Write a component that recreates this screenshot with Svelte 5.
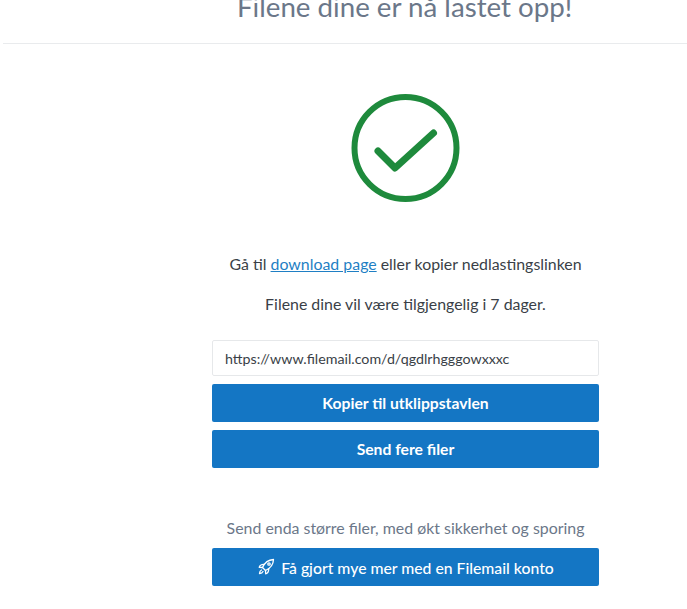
<script lang="ts">
	const url = 'https://www.filemail.com/d/qgdlrhgggowxxxc';
</script>

<div class="page">
	<header class="top">
		<h1>Filene dine er nå lastet opp!</h1>
	</header>

	<main class="content">
		<svg class="check" viewBox="0 0 110 110" width="110" height="110" aria-hidden="true">
			<circle cx="54.500" cy="55" r="51" fill="none" stroke="#1e8a3c" stroke-width="6" />
			<path d="M27 58 L44 75 L82.500 40" fill="none" stroke="#1e8a3c" stroke-width="7" stroke-linecap="round" stroke-linejoin="round" />
		</svg>

		<p class="lead">Gå til <a href="#download">download page</a> eller kopier nedlastingslinken</p>
		<p class="days">Filene dine vil være tilgjengelig i 7 dager.</p>

		<input class="link" type="text" readonly value={url} />
		<button class="btn">Kopier til utklippstavlen</button>
		<button class="btn">Send fere filer</button>

		<p class="upsell">Send enda større filer, med økt sikkerhet og sporing</p>
		<button class="btn account">
			<svg class="rocket" viewBox="0 0 18 18" width="18" height="18" fill="none" stroke="currentColor" stroke-width="1.300" stroke-linejoin="round" stroke-linecap="round" aria-hidden="true">
				<path d="M5.500 9.500 C7.500 5 11.500 1.800 16.500 1.500 C16.300 6.500 13 10.500 8.500 12.500 Z" />
				<path d="M5.500 9.500 L2.200 9.300 C2.500 7.800 4 6.300 7 6.300" />
				<path d="M8.500 12.500 L8.700 15.800 C10.200 15.500 11.700 14 11.700 11" />
				<circle cx="12" cy="6" r="1.200" />
				<path d="M4.500 12 C3.300 12.500 2.600 13.800 2.500 15.500 C4.200 15.400 5.500 14.700 6 13.500" />
			</svg>
			Få gjort mye mer med en Filemail konto
		</button>
	</main>
</div>

<style>
	:global(body) {
		margin: 0;
		background: #fff;
		font-family: 'Lato', sans-serif;
		overflow: hidden;
	}

	.page {
		height: 609px;
		overflow: hidden;
	}

	.top {
		display: flow-root;
		box-sizing: border-box;
		height: 44px;
		margin-left: 3px;
		border-bottom: 1px solid #e9ebed;
	}

	h1 {
		margin: -13px 0 0;
		padding-left: 234px;
		color: #6b7789;
		font-size: 27.700px;
		font-weight: 400;
		line-height: 40px;
		white-space: nowrap;
	}

	.content {
		width: 387px;
		margin-left: 212px;
		display: flex;
		flex-direction: column;
		align-items: center;
	}

	.check {
		margin-top: 49px;
	}

	p {
		margin: 0;
		font-size: 15.900px;
		line-height: 22px;
		color: #3a3f47;
		white-space: nowrap;
	}

	.lead {
		margin-top: 50px;
	}

	a {
		color: #1f7fc4;
		text-decoration: underline;
	}

	.days {
		margin-top: 18px;
	}

	.link {
		box-sizing: border-box;
		width: 100%;
		height: 36px;
		margin-top: 25px;
		padding: 0 12px;
		border: 1px solid #e6e8ea;
		border-radius: 2px;
		outline: none;
		color: #3a3f47;
		font-family: inherit;
		font-size: 14.250px;
	}

	.btn {
		display: flex;
		justify-content: center;
		align-items: center;
		gap: 6px;
		width: 100%;
		height: 38px;
		margin-top: 8px;
		border: none;
		border-radius: 2px;
		background: #1476c4;
		color: #fff;
		font-family: inherit;
		font-size: 15.700px;
		font-weight: 700;
		cursor: pointer;
	}

	.upsell {
		margin-top: 49px;
		color: #6b7789;
	}

	.account {
		margin-top: 9px;
		font-size: 15.750px;
		font-weight: 500;
	}

	.rocket {
		flex: none;
	}
</style>
